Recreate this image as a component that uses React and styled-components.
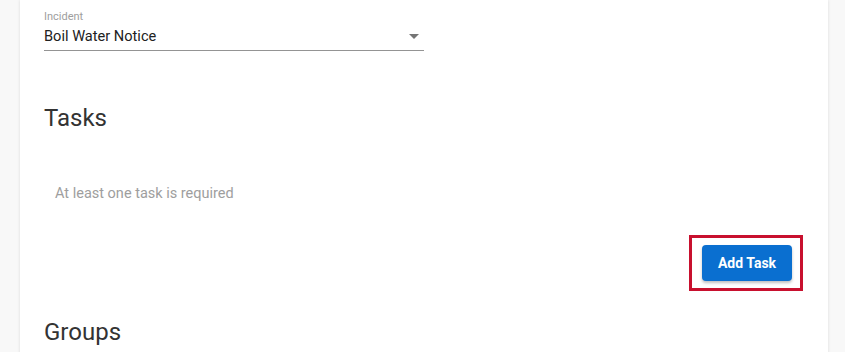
import React from 'react'
import styled, { createGlobalStyle } from 'styled-components'

const GlobalStyle = createGlobalStyle`
    body {
        margin: 0;
        background: #f8f8f8;
        font-family: Roboto, "Liberation Sans", Arial, sans-serif;
    }
`;

const Page = styled.div`
    padding: 0 17px 0 20px;
    height: 352px;
    overflow: hidden;
`;

const Card = styled.div`
    background: #ffffff;
    height: 100%;
    padding: 10px 25px 0 24px;
    box-shadow: 0 0 3px rgba(0, 0, 0, 0.12);
`;

const Field = styled.div`
    width: 380px;
`;

const FieldLabel = styled.div`
    font-size: 11px;
    line-height: 13px;
    color: #9e9e9e;
`;

const SelectRow = styled.div`
    margin-top: 3px;
    display: flex;
    align-items: center;
    justify-content: space-between;
    padding-bottom: 4px;
    border-bottom: 1px solid #949494;
`;

const SelectValue = styled.span`
    font-size: 14.6px;
    line-height: 20px;
    color: #212121;
`;

const Caret = styled.span`
    width: 0;
    height: 0;
    margin-right: 5px;
    border-left: 5px solid transparent;
    border-right: 5px solid transparent;
    border-top: 5px solid #757575;
`;

const SectionTitle = styled.h2`
    margin: ${props => props.top}px 0 0 0;
    font-size: 24px;
    line-height: 28px;
    font-weight: 400;
    color: #333333;
`;

const EmptyText = styled.p`
    margin: 52px 0 0 11px;
    font-size: 14.5px;
    line-height: 20px;
    color: #9e9e9e;
`;

const ActionRow = styled.div`
    margin-top: 31px;
    display: flex;
    justify-content: flex-end;
`;

const Highlight = styled.div`
    border: 3px solid #c8102e;
    padding: 7px 8px 7px 10px;
`;

const PrimaryButton = styled.button`
    width: 90px;
    height: 36px;
    border: none;
    border-radius: 4px;
    background: #0a6fd0;
    color: #ffffff;
    font-family: Roboto, "Liberation Sans", Arial, sans-serif;
    font-size: 14px;
    font-weight: 700;
    box-shadow: 0 2px 3px rgba(0, 0, 0, 0.25);
    cursor: pointer;
`;

export default function App() {
    return (
        <>
            <GlobalStyle />
            <Page>
                <Card>
                    <Field>
                        <FieldLabel>Incident</FieldLabel>
                        <SelectRow>
                            <SelectValue>Boil Water Notice</SelectValue>
                            <Caret />
                        </SelectRow>
                    </Field>

                    <SectionTitle top={53}>Tasks</SectionTitle>
                    <EmptyText>At least one task is required</EmptyText>

                    <ActionRow>
                        <Highlight>
                            <PrimaryButton>Add Task</PrimaryButton>
                        </Highlight>
                    </ActionRow>

                    <SectionTitle top={27}>Groups</SectionTitle>
                </Card>
            </Page>
        </>
    )
}
